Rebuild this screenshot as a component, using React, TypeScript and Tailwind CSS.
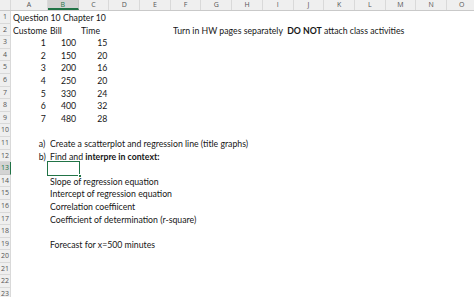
import React from "react";

const COLS = ["A", "B", "C", "D", "E", "F", "G", "H", "I", "J", "K", "L", "M", "N", "O"];
const colW = (c: string) => (c === "A" ? "w-[37px]" : "w-[30.7px]");

type Cell = { col: string; node: React.ReactNode; right?: boolean; clip?: boolean };

const B = ({ children }: { children: React.ReactNode }) => <span className="font-bold">{children}</span>;

const rows: Record<number, Cell[]> = {
  1: [{ col: "A", node: "Question 10 Chapter 10" }],
  2: [
    { col: "A", node: "Custome", clip: true },
    { col: "B", node: "Bill" },
    { col: "C", node: "Time" },
    {
      col: "F",
      node: (
        <>
          Turn in HW pages separately{"\u00a0 "}
          <B>DO NOT</B> attach class activities
        </>
      ),
    },
  ],
  3: [
    { col: "A", node: "1", right: true },
    { col: "B", node: "100", right: true },
    { col: "C", node: "15", right: true },
  ],
  4: [
    { col: "A", node: "2", right: true },
    { col: "B", node: "150", right: true },
    { col: "C", node: "20", right: true },
  ],
  5: [
    { col: "A", node: "3", right: true },
    { col: "B", node: "200", right: true },
    { col: "C", node: "16", right: true },
  ],
  6: [
    { col: "A", node: "4", right: true },
    { col: "B", node: "250", right: true },
    { col: "C", node: "20", right: true },
  ],
  7: [
    { col: "A", node: "5", right: true },
    { col: "B", node: "330", right: true },
    { col: "C", node: "24", right: true },
  ],
  8: [
    { col: "A", node: "6", right: true },
    { col: "B", node: "400", right: true },
    { col: "C", node: "32", right: true },
  ],
  9: [
    { col: "A", node: "7", right: true },
    { col: "B", node: "480", right: true },
    { col: "C", node: "28", right: true },
  ],
  11: [
    { col: "A", node: "a)", right: true },
    { col: "B", node: "Create a scatterplot and regression line (title graphs)" },
  ],
  12: [
    { col: "A", node: "b)", right: true },
    {
      col: "B",
      node: (
        <>
          Find and <B>interpre in context:</B>
        </>
      ),
    },
  ],
  14: [{ col: "B", node: "Slope of regression equation" }],
  15: [{ col: "B", node: "Intercept of regression equation" }],
  16: [{ col: "B", node: "Correlation coeffiicent" }],
  17: [{ col: "B", node: "Coefficient of determination (r-square)" }],
  19: [{ col: "B", node: "Forecast for x=500 minutes" }],
};

function Row({ n }: { n: number }) {
  const cells = rows[n] || [];
  const selected = n === 13;
  return (
    <div className="flex h-[12.6px] shrink-0">
      <div
        className={
          "w-[11px] shrink-0 border-b border-r text-center text-[7px] leading-[12px] " +
          (selected
            ? "bg-[#d3d3d3] text-[#217346] border-r-[#217346] border-b-[#c8c8c8]"
            : "bg-[#efefef] text-[#555] border-[#d9d9d9]")
        }
        style={{ fontFamily: '"Open Sans", sans-serif' }}
      >
        {n}
      </div>
      {COLS.map((c) => {
        const cell = cells.find((x) => x.col === c);
        const isSel = selected && c === "B";
        return (
          <div key={c} className={colW(c) + " shrink-0 relative"}>
            {cell && (
              <div
                className={
                  "absolute inset-0 whitespace-nowrap leading-[13.4px] text-[9.8px] text-[#161616] " +
                  (cell.right ? "flex justify-end pr-[2.5px]" : "pl-[2px]") +
                  (cell.clip ? " overflow-hidden" : "")
                }
              >
                <span
                  className={
                    "inline-block scale-x-[0.89] " + (cell.right ? "origin-right" : "origin-left")
                  }
                >
                  {cell.node}
                </span>
              </div>
            )}
            {isSel && (
              <>
                <div className="absolute left-[-1px] top-[-1px] right-[-1px] bottom-[-1px] border-[1.5px] border-[#217346]" />
                <div className="absolute right-[-3px] bottom-[-3px] w-[4px] h-[4px] bg-[#217346] border border-white" />
              </>
            )}
          </div>
        );
      })}
    </div>
  );
}

export default function App() {
  const rowNums = Array.from({ length: 23 }, (_, i) => i + 1);
  return (
    <div
      className="w-[474px] h-[297px] overflow-hidden bg-white flex flex-col"
      style={{ fontFamily: 'Lato, "Open Sans", sans-serif' }}
    >
      <div className="flex h-[11px] shrink-0 bg-[#efefef] border-b border-[#c9c9c9]">
        <div className="w-[11px] shrink-0 border-r border-[#d9d9d9]" />
        {COLS.map((c) => (
          <div
            key={c}
            className={
              colW(c) +
              " shrink-0 border-r text-center text-[7px] leading-[10px] " +
              (c === "B"
                ? "bg-[#d3d3d3] text-[#217346] border-b-2 border-b-[#217346] border-r-[#c8c8c8]"
                : "text-[#555] border-[#d9d9d9]")
            }
            style={{ fontFamily: '"Open Sans", sans-serif' }}
          >
            {c}
          </div>
        ))}
      </div>
      {rowNums.map((n) => (
        <Row key={n} n={n} />
      ))}
    </div>
  );
}
